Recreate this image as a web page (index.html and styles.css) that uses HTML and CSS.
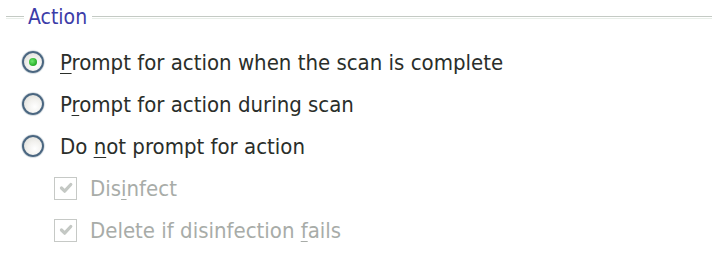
FILE: index.html
```html
<!DOCTYPE html>
<html>
<head>
<meta charset="utf-8">
<link rel="stylesheet" href="styles.css">
</head>
<body>
<div class="group">
  <div class="legend">
    <span class="rule-start"></span>
    <span class="legend-text">Action</span>
    <span class="rule"></span>
  </div>
  <div class="options">
    <div class="row radio-row">
      <span class="radio checked"><span class="dot"></span></span>
      <span class="label"><u>P</u>rompt for action when the scan is complete</span>
    </div>
    <div class="row radio-row">
      <span class="radio"></span>
      <span class="label">P<u>r</u>ompt for action during scan</span>
    </div>
    <div class="row radio-row">
      <span class="radio"></span>
      <span class="label">Do <u>n</u>ot prompt for action</span>
    </div>
    <div class="row check-row disabled">
      <span class="check"><svg viewBox="0 0 12 12" width="16" height="16"><path d="M2.6 6 L5 8.4 L9.6 3.4" fill="none" stroke="#c4c8c4" stroke-width="2.4" stroke-linecap="round" stroke-linejoin="round"/></svg></span>
      <span class="label">Dis<u>i</u>nfect</span>
    </div>
    <div class="row check-row disabled">
      <span class="check"><svg viewBox="0 0 12 12" width="16" height="16"><path d="M2.6 6 L5 8.4 L9.6 3.4" fill="none" stroke="#c4c8c4" stroke-width="2.4" stroke-linecap="round" stroke-linejoin="round"/></svg></span>
      <span class="label">Delete if disinfection <u>f</u>ails</span>
    </div>
  </div>
</div>
</body>
</html>
```

FILE: styles.css
```css
html, body {
  margin: 0;
  padding: 0;
  background: #ffffff;
}
body {
  width: 714px;
  height: 260px;
  overflow: hidden;
  font-family: "DejaVu Sans Condensed", "DejaVu Sans", sans-serif;
  font-size: 22px;
  color: #2a2e2a;
}
.group {
  display: flex;
  flex-direction: column;
}
.legend {
  height: 34px;
  display: flex;
  align-items: center;
  padding-left: 6px;
  padding-right: 2px;
  font-size: 21px;
}
.rule-start, .rule {
  height: 1px;
  border-top: 1px solid #c4cac4;
  border-bottom: 1px solid #e8eee8;
}
.rule-start {
  width: 18px;
}
.rule {
  flex: 1;
}
.legend-text {
  color: #3c3ca8;
  padding: 0 5px 0 4px;
  line-height: 34px;
}
.options {
  padding-top: 7px;
  display: flex;
  flex-direction: column;
}
.row {
  height: 42px;
  display: flex;
  align-items: center;
}
.radio-row {
  padding-left: 22px;
  gap: 16px;
}
.check-row {
  padding-left: 54px;
  gap: 13px;
}
.radio {
  width: 18px;
  height: 18px;
  border: 2px solid #4a6680;
  border-radius: 50%;
  background: radial-gradient(circle at 60% 65%, #ffffff 0%, #f2f1ee 45%, #d8d8d2 100%);
  display: flex;
  align-items: center;
  justify-content: center;
  box-shadow: 0 0 1px 0.5px #b8c4cc;
}
.dot {
  width: 8px;
  height: 8px;
  border-radius: 50%;
  background: radial-gradient(circle at 40% 40%, #6ee86e 0%, #2fb42f 60%, #1a8a1a 100%);
}
.check {
  width: 21px;
  height: 21px;
  border: 1px solid #c6c9c6;
  background: #ffffff;
  display: flex;
  align-items: center;
  justify-content: center;
}
.disabled .label {
  color: #a8aca8;
}
u {
  text-decoration-thickness: 1px;
  text-underline-offset: 3px;
}
```
